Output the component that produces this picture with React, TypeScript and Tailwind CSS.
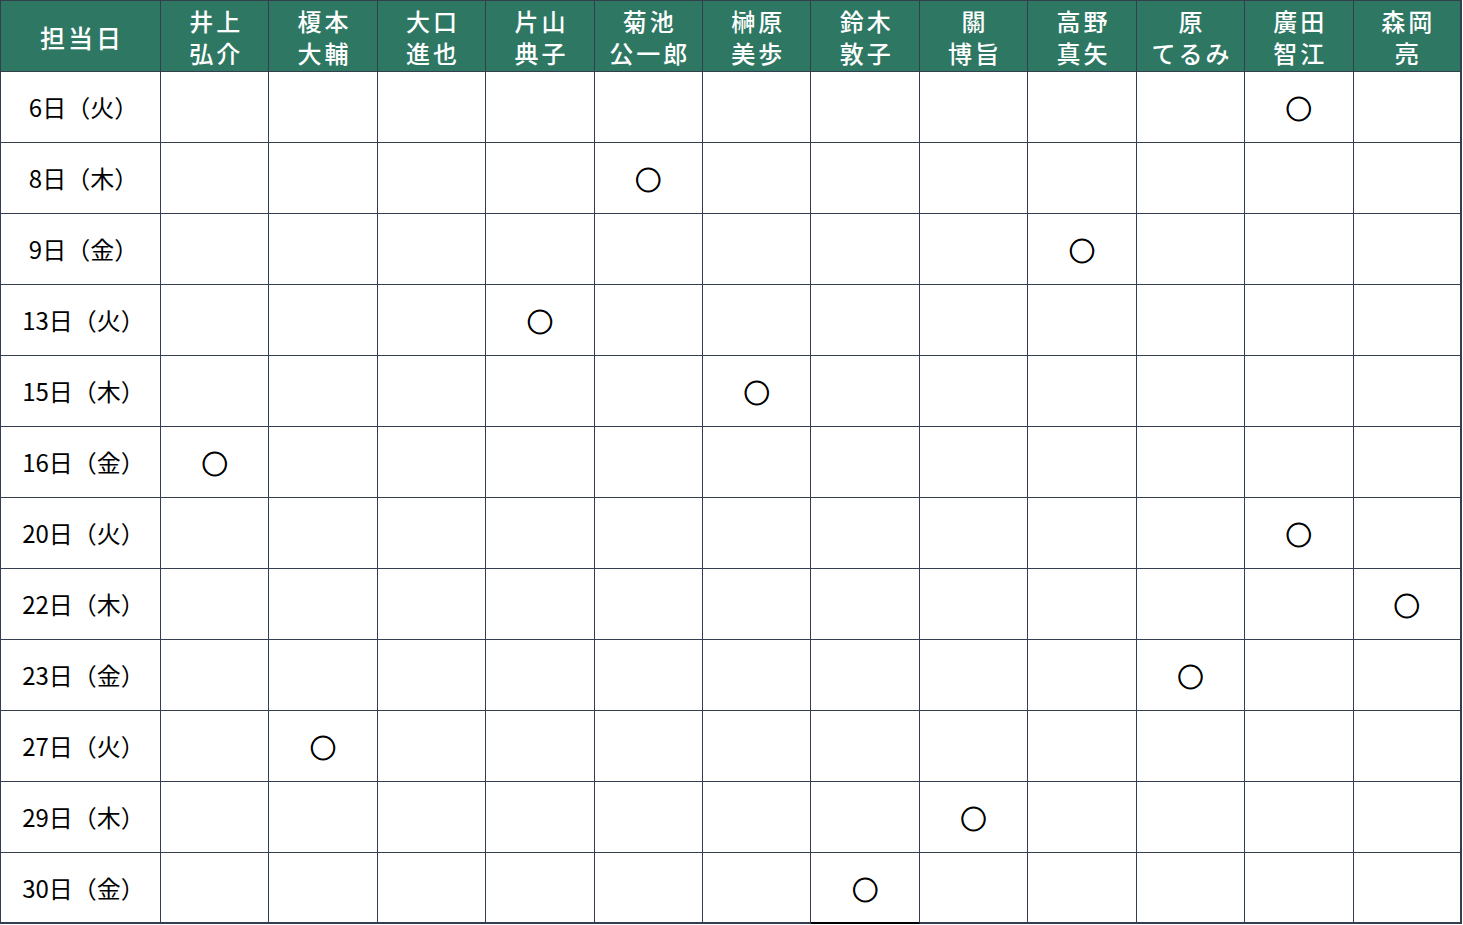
import React from "react";

const names: [string, string][] = [
  ["井上", "弘介"],
  ["榎本", "大輔"],
  ["大口", "進也"],
  ["片山", "典子"],
  ["菊池", "公一郎"],
  ["榊原", "美歩"],
  ["鈴木", "敦子"],
  ["關", "博旨"],
  ["高野", "真矢"],
  ["原", "てるみ"],
  ["廣田", "智江"],
  ["森岡", "亮"],
];

const rows: [string, number][] = [
  ["6日（火）", 10],
  ["8日（木）", 4],
  ["9日（金）", 8],
  ["13日（火）", 3],
  ["15日（木）", 5],
  ["16日（金）", 0],
  ["20日（火）", 10],
  ["22日（木）", 11],
  ["23日（金）", 9],
  ["27日（火）", 1],
  ["29日（木）", 7],
  ["30日（金）", 6],
];

export default function App() {
  return (
    <div
      className="w-[1463px] h-[925px] bg-white"
      style={{ fontFamily: '"Noto Sans CJK JP", "Noto Sans", sans-serif' }}
    >
      <div className="grid w-[1462px] grid-cols-[160px_repeat(12,1fr)] border-l border-t border-[#333f4f]">
        <div className="flex h-[71px] items-center justify-center border-b border-r border-[#333f4f] bg-[#2e7763] pl-[3px] pt-[2px] text-[25px] font-medium leading-none tracking-[3px] text-white">
          担当日
        </div>
        {names.map(([a, b], i) => (
          <div
            key={a}
            className={`flex h-[71px] flex-col items-center justify-center border-b border-[#333f4f] bg-[#2e7763] pl-[3px] pt-[1px] text-[24px] font-medium leading-[32px] tracking-[3px] text-white ${
              i === 11 ? "border-r-2" : "border-r"
            }`}
          >
            <span className="leading-[32px]">{a}</span>
            <span className="leading-[32px]">{b}</span>
          </div>
        ))}
        {rows.map(([label, col], r) => {
          const last = r === rows.length - 1;
          return (
            <React.Fragment key={label}>
              <div
                className={`flex h-[71px] items-center justify-center border-r border-[#333f4f] pl-[6px] text-[24px] font-normal leading-none text-black ${
                  last ? "border-b-2" : "border-b"
                }`}
              >
                {label}
              </div>
              {names.map((_, c) => (
                <div
                  key={c}
                  className={`flex h-[71px] items-center justify-center pt-[2px] text-[26px] font-normal leading-none text-black [-webkit-text-stroke:1px_black] ${
                    c === 11 ? "border-r-2" : "border-r"
                  } ${last ? "border-b-2" : "border-b"} ${
                    last && c === 6 ? "border-r-[#333f4f] border-b-black" : "border-[#333f4f]"
                  }`}
                >
                  {c === col ? "○" : ""}
                </div>
              ))}
            </React.Fragment>
          );
        })}
      </div>
    </div>
  );
}
